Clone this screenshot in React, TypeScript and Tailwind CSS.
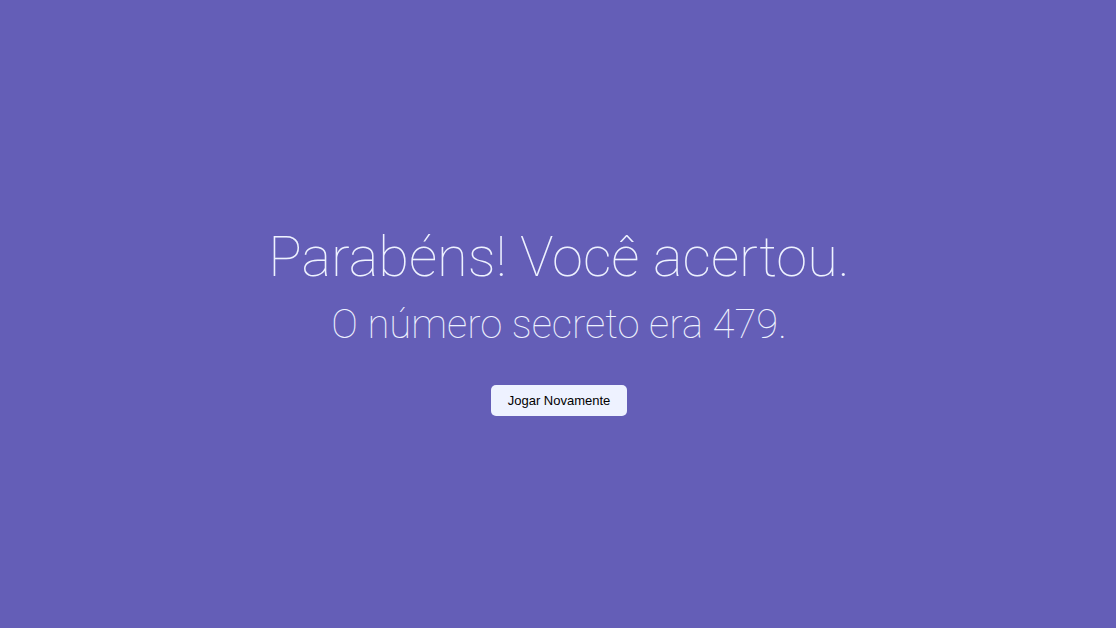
export default function App() {
  return (
    <main className="flex min-h-screen flex-col items-center justify-center bg-[#645eb7] pt-[10px] pl-[2px] text-center font-['Roboto',sans-serif] font-thin text-[#eef2ff]">
      <h1 className="text-[56px] leading-[68px]">Parabéns! Você acertou.</h1>
      <h2 className="text-[40px] leading-[68px]">O número secreto era 479.</h2>
      <button
        type="button"
        className="mt-[26px] cursor-pointer rounded-[5px] bg-[#eef2ff] px-[17px] py-2 font-['Liberation_Sans',sans-serif] text-[13px] leading-[15px] font-normal text-black"
      >
        Jogar Novamente
      </button>
    </main>
  );
}
